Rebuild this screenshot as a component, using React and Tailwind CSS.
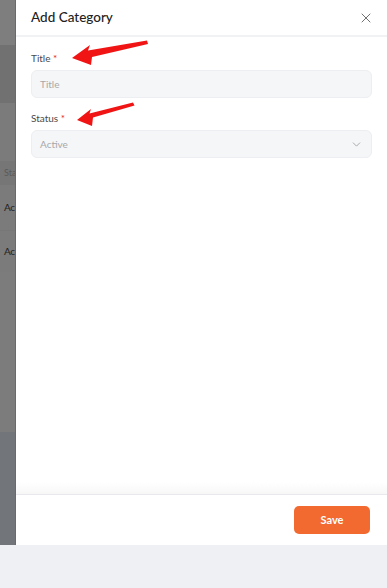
import { X, ChevronDown } from "lucide-react";

const font = { fontFamily: "Lato, 'Open Sans', sans-serif" };

const BackdropStrip = () => {
  return (
    <div className="w-[16px] shrink-0 overflow-hidden flex flex-col border-r border-[#6a6a6a]">
      <div className="h-[45px] bg-[#7e7e7e]"></div>
      <div className="h-[58px] bg-[#717171]"></div>
      <div className="h-[58px] bg-[#7b7b7b]"></div>
      <div className="h-[24px] bg-[#767676] flex items-center pl-[4px]">
        <span className="text-[9px] text-[#5a5a5a] whitespace-nowrap">Sta</span>
      </div>
      <div className="h-[45px] bg-[#7b7b7b] flex items-center pl-[4px]">
        <span className="text-[10px] text-[#1f1f1f] whitespace-nowrap tracking-[-0.3px]">Ac</span>
      </div>
      <div className="h-[42px] bg-[#7b7b7b] flex items-center pl-[4px] border-t border-[#777]">
        <span className="text-[10px] text-[#1f1f1f] whitespace-nowrap tracking-[-0.3px]">Ac</span>
      </div>
      <div className="h-[160px] bg-[#7c7c7c]"></div>
      <div className="flex-1 bg-[#727579]"></div>
    </div>
  );
};

const Field = ({ label, children }) => (
  <div className="flex flex-col">
    <label className="text-[10px] text-[#4a4a4a] mb-[6px] leading-[12px]">
      {label} <span className="text-[#e11d2a]">*</span>
    </label>
    {children}
  </div>
);

const App = () => {
  return (
    <div className="relative w-[387px] h-[588px] bg-[#eff0f4] overflow-hidden" style={font}>
      <div className="flex h-[545px]">
        <BackdropStrip />

        {/* Drawer */}
        <div className="flex-1 bg-white flex flex-col">
          <div className="h-[37px] flex items-center justify-between pl-[15px] pr-[13px] border-b-2 border-[#f1f2f4]">
            <h2 className="text-[13.5px] font-medium text-[#222]">Add Category</h2>
            <X size={16} strokeWidth={1.4} className="text-[#666]" />
          </div>

          <div className="flex-1 px-[15px] pt-[15px] flex flex-col gap-[14px]">
            <Field label="Title">
              <div className="h-[28px] rounded-[6px] bg-[#f5f6f8] border border-[#eceef1] flex items-center px-[8px]">
                <span className="text-[10px] text-[#a8a8a8]">Title</span>
              </div>
            </Field>
            <Field label="Status">
              <div className="h-[28px] rounded-[6px] bg-[#f5f6f8] border border-[#eceef1] flex items-center justify-between px-[8px]">
                <span className="text-[10px] text-[#a8a8a8]">Active</span>
                <ChevronDown size={13} strokeWidth={1.5} className="text-[#999]" />
              </div>
            </Field>
          </div>

          <div className="h-[12px] bg-gradient-to-b from-white to-[#f7f7f8]"></div>
          <div className="h-[51px] border-t border-[#e8e9ec] flex items-center justify-end pr-[17px]">
            <button className="w-[76px] h-[28px] rounded-[5px] bg-[#f26a2f] text-white text-[11px] font-bold">
              Save
            </button>
          </div>
        </div>
      </div>

      {/* annotation arrows */}
      <svg className="absolute inset-0 pointer-events-none" width="387" height="588" viewBox="0 0 387 588">
        <polygon
          fill="#f01414"
          points="72,58 90,45 88,50.5 147,40.5 148,44 92,57 91,65"
        />
        <polygon
          fill="#f01414"
          points="77,120 91,109 89.5,113.5 133,102.5 134.5,105.5 93,117.5 92,126"
        />
      </svg>
    </div>
  );
};

export default App;
